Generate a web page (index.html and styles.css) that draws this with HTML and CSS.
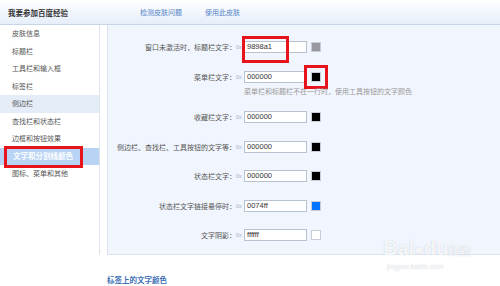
FILE: index.html
```html
<!DOCTYPE html>
<html lang="zh-CN">
<head>
    <meta charset="UTF-8">
    <title>皮肤设置</title>
    <link rel="stylesheet" href="styles.css">
</head>
<body>
    <header class="topbar">
        <h1 class="brand">我要参加百度经验</h1>
        <a class="toplink" href="#">检测皮肤问题</a>
        <a class="toplink" href="#">使用此皮肤</a>
    </header>

    <div class="layout">
        <ul class="sidebar">
            <li>皮肤信息</li>
            <li>标题栏</li>
            <li>工具栏和输入框</li>
            <li>标签栏</li>
            <li class="hover">侧边栏</li>
            <li>查找栏和状态栏</li>
            <li>边框和按钮效果</li>
            <li class="active"><span class="mark">文字和分割线颜色</span></li>
            <li>图标、菜单和其他</li>
        </ul>

        <main class="main">
            <div class="panel">
                <div class="row">
                    <div class="field">
                        <label>窗口未激活时，标题栏文字：</label>
                        <span class="prefix">0x</span>
                        <span class="input mark-input">9898a1</span>
                        <span class="swatch" style="background:#9898a1"></span>
                    </div>
                </div>
                <div class="row row-hint">
                    <div class="field">
                        <label>菜单栏文字：</label>
                        <span class="prefix">0x</span>
                        <span class="input">000000</span>
                        <span class="swatch mark-swatch" style="background:#000000"></span>
                    </div>
                    <p class="hint">菜单栏和标题栏不在一行时，使用工具按钮的文字颜色</p>
                </div>
                <div class="row">
                    <div class="field">
                        <label>收藏栏文字：</label>
                        <span class="prefix">0x</span>
                        <span class="input">000000</span>
                        <span class="swatch" style="background:#000000"></span>
                    </div>
                </div>
                <div class="row">
                    <div class="field">
                        <label>侧边栏、查找栏、工具按钮的文字等：</label>
                        <span class="prefix">0x</span>
                        <span class="input">000000</span>
                        <span class="swatch" style="background:#000000"></span>
                    </div>
                </div>
                <div class="row">
                    <div class="field">
                        <label>状态栏文字：</label>
                        <span class="prefix">0x</span>
                        <span class="input">000000</span>
                        <span class="swatch" style="background:#000000"></span>
                    </div>
                </div>
                <div class="row">
                    <div class="field">
                        <label>状态栏文字链接悬停时：</label>
                        <span class="prefix">0x</span>
                        <span class="input">0074ff</span>
                        <span class="swatch" style="background:#0074ff"></span>
                    </div>
                </div>
                <div class="row">
                    <div class="field">
                        <label>文字阴影：</label>
                        <span class="prefix">0x</span>
                        <span class="input">ffffff</span>
                        <span class="swatch" style="background:#ffffff"></span>
                    </div>
                </div>
            </div>
            <h2 class="section">标签上的文字颜色</h2>
        </main>
    </div>

    <div class="watermark">
        <div class="wm-logo">Bai<span class="paw">●</span>du<span class="wm-cn">经验</span></div>
        <div class="wm-url">jingyan.baidu.com</div>
    </div>
</body>
</html>
```

FILE: styles.css
```css
* {
    box-sizing: border-box;
}

body {
    margin: 0;
    width: 500px;
    height: 286px;
    overflow: hidden;
    background: #fff;
    font-family: "Liberation Sans", "Noto Sans CJK SC", sans-serif;
    font-size: 7px;
    color: #555;
    position: relative;
}

.topbar {
    height: 25px;
    display: flex;
    align-items: center;
    padding-left: 8px;
    background: linear-gradient(#ffffff, #e6eefa);
    border-bottom: 1px solid #c9d4e8;
}

.brand {
    margin: 0;
    width: 132px;
    font-size: 7.5px;
    font-weight: bold;
    color: #333;
}

.toplink {
    color: #5584c4;
    text-decoration: none;
    font-size: 7px;
    margin-right: 23px;
}

.layout {
    display: flex;
    align-items: flex-start;
}

.sidebar {
    list-style: none;
    margin: 0;
    padding: 0;
    width: 100px;
    height: 230px;
    border-right: 1px solid #dde3ec;
}

.sidebar li {
    height: 17.5px;
    line-height: 17.5px;
    padding-left: 12px;
    color: #555;
}

.sidebar li.hover {
    background: #e4ecf8;
}

.sidebar li.active {
    background: #b8d3f4;
    color: #fff;
    padding-left: 7px;
}

.mark {
    display: inline-block;
    line-height: 16px;
    padding: 0 7px 0 6px;
    outline: 3px solid #e8141c;
    font-size: 7.5px;
    font-weight: bold;
}

.main {
    flex: 1;
    padding-left: 7px;
}

.panel {
    height: 230px;
    padding-top: 7px;
    background: #f1f5fd;
    border-left: 1px solid #dbe3ef;
    border-bottom: 1px solid #dbe3ef;
}

.row {
    padding: 8px 0 7.5px;
}

.row-hint {
    padding-bottom: 3.5px;
}

.field {
    display: flex;
    align-items: center;
    height: 14px;
}

.field label {
    width: 128px;
    text-align: right;
    color: #555;
}

.prefix {
    width: 8px;
    font-size: 5.5px;
    color: #aab;
}

.input {
    width: 63px;
    height: 12px;
    line-height: 10px;
    padding-left: 2px;
    background: #fff;
    border: 1px solid #b9c2d0;
    font-size: 7.5px;
    color: #333;
}

.mark-input {
    position: relative;
}

.mark-input::after {
    content: "";
    position: absolute;
    left: -3px;
    top: -6px;
    width: 41px;
    height: 21px;
    border: 3px solid #e8141c;
}

.swatch {
    width: 10px;
    height: 10px;
    margin-left: 4px;
    border: 1px solid #c7ccd6;
}

.mark-swatch {
    outline: 3px solid #e8141c;
    outline-offset: 4px;
}

.hint {
    margin: 1px 0 0 136px;
    line-height: 14px;
    color: #9a9a9a;
}

.section {
    margin: 19px 0 0;
    font-size: 7.5px;
    font-weight: bold;
    color: #3c6fb6;
}

.watermark {
    position: absolute;
    left: 383px;
    top: 236px;
    color: rgba(255, 255, 255, 0.85);
    text-shadow: 0 0 1px rgba(150, 160, 180, 0.6);
}

.wm-logo {
    font-size: 20px;
    font-weight: bold;
    line-height: 24px;
}

.paw {
    font-size: 16px;
}

.wm-cn {
    font-size: 11px;
}

.wm-url {
    font-size: 7px;
    margin-left: 4px;
}
```
